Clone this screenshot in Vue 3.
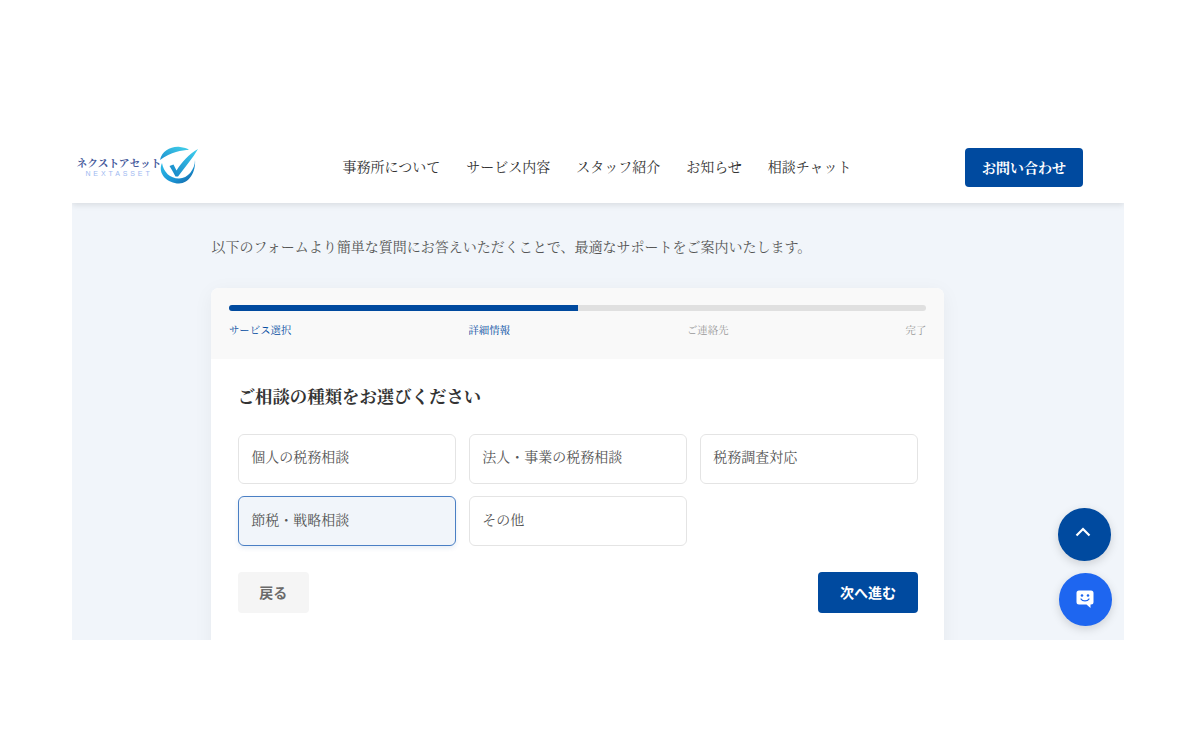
<script setup>
const nav = ['事務所について', 'サービス内容', 'スタッフ紹介', 'お知らせ', '相談チャット']
const steps = [
  { label: 'サービス選択', active: true },
  { label: '詳細情報', active: true },
  { label: 'ご連絡先', active: false },
  { label: '完了', active: false }
]
const options = [
  { label: '個人の税務相談', selected: false },
  { label: '法人・事業の税務相談', selected: false },
  { label: '税務調査対応', selected: false },
  { label: '節税・戦略相談', selected: true },
  { label: 'その他', selected: false }
]
</script>

<template>
  <div class="page">
    <div class="frame">
      <header class="header">
        <div class="logo">
          <div class="logo-text">
            <span class="logo-jp">ネクストアセット</span>
            <span class="logo-en">NEXTASSET</span>
          </div>
          <svg class="logo-mark" width="50" height="46" viewBox="0 0 50 46">
            <defs>
              <linearGradient id="lg1" x1="0" y1="0" x2="1" y2="1">
                <stop offset="0" stop-color="#2fc3ea" />
                <stop offset="0.6" stop-color="#1a94d4" />
                <stop offset="1" stop-color="#14609f" />
              </linearGradient>
              <linearGradient id="lg2" x1="0" y1="1" x2="1" y2="0">
                <stop offset="0" stop-color="#1583c6" />
                <stop offset="1" stop-color="#3fd0ee" />
              </linearGradient>
              <linearGradient id="lg3" x1="0" y1="1" x2="1" y2="0">
                <stop offset="0" stop-color="#1a8fd0" />
                <stop offset="1" stop-color="#44d2ea" />
              </linearGradient>
            </defs>
            <path d="M5 18C7 9 16 4 25 5C29 5.500 32 6 34 8C27 8 16 10 5 18Z" fill="url(#lg3)" />
            <path d="M7 21C2 32 13 41.500 24 41.500C34 41.500 41 30 40 18C40 27 33 36.500 24 36.500C15 36.500 8.500 30 7 21Z" fill="url(#lg1)" />
            <path d="M14.500 24L18.500 22.500L21.500 28.500C27 20 34 12 43 7C38 16 30 25 23 34.500L20.500 34.500C18.500 31 16.500 27 14.500 24Z" fill="url(#lg2)" />
          </svg>
        </div>
        <nav class="nav">
          <a v-for="item in nav" :key="item" class="nav-link">{{ item }}</a>
        </nav>
        <button class="contact">お問い合わせ</button>
      </header>

      <main class="main">
        <div class="inner">
          <p class="lead">以下のフォームより簡単な質問にお答えいただくことで、最適なサポートをご案内いたします。</p>
          <section class="card">
            <div class="progress-area">
              <div class="track"><div class="fill"></div></div>
              <div class="steps">
                <span v-for="s in steps" :key="s.label" class="step" :class="{ on: s.active }">{{ s.label }}</span>
              </div>
            </div>
            <div class="form">
              <h2 class="title">ご相談の種類をお選びください</h2>
              <div class="grid">
                <div v-for="o in options" :key="o.label" class="option" :class="{ selected: o.selected }">{{ o.label }}</div>
              </div>
              <div class="actions">
                <button class="back">戻る</button>
                <button class="next">次へ進む</button>
              </div>
            </div>
          </section>
        </div>
        <div class="floats">
          <button class="fab up" aria-label="top">
            <svg width="18" height="18" viewBox="0 0 18 18"><path d="M1.500 10.500L8 4L14.500 10.500" fill="none" stroke="#fff" stroke-width="2.200" /></svg>
          </button>
          <button class="fab chat" aria-label="chat">
            <svg width="20" height="20" viewBox="0 0 20 20">
              <path d="M4 1.500H16A2.500 2.500 0 0 1 18.500 4V13A2.500 2.500 0 0 1 16 15.500H15.500V19L11.500 15.500H4A2.500 2.500 0 0 1 1.500 13V4A2.500 2.500 0 0 1 4 1.500Z" fill="#fff" />
              <circle cx="7" cy="6.500" r="1.300" fill="#1e66f0" />
              <circle cx="13" cy="6.500" r="1.300" fill="#1e66f0" />
              <path d="M6 10C7.500 12.500 12.500 12.500 14 10" fill="none" stroke="#1e66f0" stroke-width="1.400" stroke-linecap="round" />
            </svg>
          </button>
        </div>
      </main>
    </div>
  </div>
</template>

<style>
html, body { margin: 0; background: #fff; }
</style>

<style scoped>
.page {
  width: 1200px;
  height: 750px;
  padding: 130px 76px 110px 72px;
  box-sizing: border-box;
  font-family: "Liberation Serif", "Noto Serif CJK JP", "Noto Sans CJK JP", serif;
  overflow: hidden;
}
.frame {
  height: 510px;
  display: flex;
  flex-direction: column;
  overflow: hidden;
  background: #f1f5fa;
}
.header {
  height: 73px;
  flex: none;
  background: #fff;
  display: flex;
  align-items: center;
  justify-content: space-between;
  padding: 0 41px 0 5px;
  box-shadow: 0 2px 6px rgba(0, 0, 0, 0.1);
  position: relative;
  z-index: 1;
}
.logo { display: flex; align-items: center; width: 122px; }
.logo-text { display: flex; flex-direction: column; align-items: center; width: 84px; flex: none; margin-top: 1px; }
.logo-jp { font-size: 10.700px; line-height: 12px; font-weight: 700; color: #45599b; white-space: nowrap; }
.logo-en { font-size: 7px; line-height: 9px; letter-spacing: 2.900px; color: #9db8f0; font-family: "Liberation Sans", sans-serif; }
.logo-mark { flex: none; margin-left: -6px; margin-top: -3px; }
.nav { display: flex; gap: 26px; margin-left: 30px; margin-top: 2px; }
.nav-link { font-size: 14px; color: #333; line-height: 20px; white-space: nowrap; }
.contact {
  width: 118px;
  height: 39px;
  margin-top: 2px;
  background: #004a9f;
  color: #fff;
  border: none;
  border-radius: 4px;
  font-family: inherit;
  font-weight: 700;
  font-size: 14px;
  padding: 0 0 2px;
}
.main { flex: 1; position: relative; }
.inner { width: 732.600px; margin-left: 139.400px; }
.lead { margin: 35px 0 0; font-size: 14px; line-height: 20px; color: #555; white-space: nowrap; }
.card {
  margin-top: 30px;
  background: #fff;
  border-radius: 8px;
  overflow: hidden;
  box-shadow: 0 4px 20px rgba(0, 0, 0, 0.05);
}
.progress-area { background: #f9f9f9; height: 71px; padding: 17px 17.600px 0; box-sizing: border-box; }
.track { height: 6px; border-radius: 3px; background: #e0e0e0; overflow: hidden; }
.fill { width: 50%; height: 100%; background: #004a9f; }
.steps { display: flex; justify-content: space-between; margin-top: 12px; }
.step { font-size: 10.400px; line-height: 16px; color: #999; }
.step.on { color: #004a9f; }
.form { padding: 25px 26px 60px 26.300px; }
.title { margin: 0; font-size: 17.400px; line-height: 26px; font-weight: 700; color: #333; }
.grid { display: grid; grid-template-columns: repeat(3, 1fr); gap: 12.800px; margin-top: 24px; }
.option {
  height: 49.600px;
  box-sizing: border-box;
  border: 1px solid #e4e4e4;
  border-radius: 6px;
  padding: 0 12.500px 5px;
  display: flex;
  align-items: center;
  font-size: 14px;
  color: #555;
}
.option.selected {
  border-color: #4a7fc4;
  background: #f1f5fa;
  box-shadow: 0 2px 5px rgba(0, 74, 159, 0.1);
}
.actions { display: flex; justify-content: space-between; margin-top: 26px; }
.back, .next {
  height: 41px;
  border: none;
  border-radius: 4px;
  padding: 0;
  font: 700 14px "Noto Sans CJK JP", sans-serif;
}
.back { width: 71px; background: #f5f5f5; color: #6a6a6a; }
.next { width: 100px; background: #004a9f; color: #fff; }
.floats {
  position: absolute;
  left: 986px;
  top: 305px;
  display: flex;
  flex-direction: column;
  gap: 12.500px;
}
.fab {
  width: 52.500px;
  height: 52.500px;
  border-radius: 50%;
  border: none;
  padding: 0;
  display: flex;
  align-items: center;
  justify-content: center;
  box-shadow: 0 3px 10px rgba(0, 0, 0, 0.15);
}
.up { background: #004a9f; }
.chat { background: #1e66f0; margin-left: 1px; }
</style>
